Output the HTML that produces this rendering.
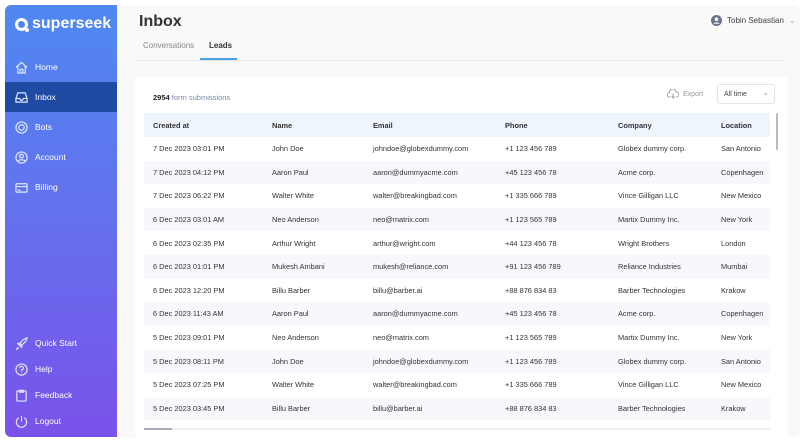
<!DOCTYPE html>
<html><head><style>
*{box-sizing:border-box;margin:0;padding:0}
body{width:806px;height:442px;background:#fff;font-family:"Liberation Sans",sans-serif;position:relative;overflow:hidden;color:#222}
.app{position:absolute;left:5px;top:5px;width:795px;height:432px;background:#f9f9fa;border-radius:6px;overflow:hidden}
.side{position:absolute;left:0;top:0;width:112px;height:432px;background:linear-gradient(180deg,#4f88f1 0%,#6470ee 50%,#7a52ea 100%)}
.logo{position:absolute;left:10px;top:10px;color:#fff;font-size:16px;font-weight:bold;display:flex;align-items:center;gap:4px}
.logo .o{width:13px;height:13px;border:3px solid #fff;border-radius:50%;position:relative}
.logo .o:after{content:"";position:absolute;right:-4px;bottom:-4px;width:4px;height:4px;background:#fff;border-radius:50%}
.nav{position:absolute;left:0;width:112px;height:30px;display:flex;align-items:center;padding-left:10px;color:#fff;font-size:8.5px;gap:7px}
.nav svg{width:13px;height:13px;fill:none;stroke:#dfe6ff;stroke-width:1.3}
.nav.act{background:#1f4aa3}
.title{position:absolute;left:134px;top:8px;font-size:16px;font-weight:bold;color:#333}
.tabs{position:absolute;left:138px;top:41px;font-size:8px;color:#888}
.tabs span{position:absolute;white-space:nowrap}
.uline{position:absolute;left:195px;top:53px;width:37px;height:2px;background:#4aa3e0}
.hline{position:absolute;left:130px;top:55px;width:650px;height:1px;background:#e8e8ea}
.user{position:absolute;left:706px;top:10px;font-size:8px;color:#444;display:flex;align-items:center;gap:5px}
.card{position:absolute;left:130px;top:72px;width:653px;height:360px;background:#fff;border-radius:4px}
.sub{position:absolute;left:18px;top:16px;font-size:7.5px;color:#7a88a8}
.sub b{color:#222}
.export{position:absolute;left:532px;top:12px;font-size:7px;color:#999;display:flex;align-items:center;gap:4px}
.sel{position:absolute;left:582px;top:7px;width:58px;height:20px;border:1px solid #e3e3e6;border-radius:3px;font-size:7px;color:#444;padding:6px 0 0 6px}
.sel:after{content:"⌄";position:absolute;right:5px;top:3px;color:#999;font-size:8px}
table{position:absolute;left:9px;top:36px;width:626px;border-collapse:collapse;font-size:7.4px;color:#333}
td,th{height:23.6px;text-align:left;font-weight:normal;padding-left:9px;white-space:nowrap}
th{font-weight:bold;color:#333;background:#eef5fd;height:24px}
tr:nth-child(odd) td{background:#f6f8fb}
.vs{position:absolute;left:641px;top:36px;width:2px;height:37px;background:#bbb;border-radius:1px}
.hs{position:absolute;left:9px;top:351px;width:626px;height:2px;background:#eee}
.hs i{display:block;width:28px;height:2px;background:#aab}
</style></head><body>
<div class="app">
<div class="side">
<div class="logo"><div class="o"></div>superseek</div>
<div class="nav" style="top:47px"><svg viewBox="0 0 14 14"><path d="M1 7L7 1.5 13 7M3 5.5V13h8V5.5M5.5 13V9h3v4"/></svg>Home</div>
<div class="nav act" style="top:77px"><svg viewBox="0 0 14 14"><path d="M1 8L3 2h8l2 6v4H1zM1 8h4l1 2h2l1-2h4"/></svg>Inbox</div>
<div class="nav" style="top:107px"><svg viewBox="0 0 14 14"><circle cx="7" cy="7" r="6"/><circle cx="7" cy="7" r="3"/></svg>Bots</div>
<div class="nav" style="top:137px"><svg viewBox="0 0 14 14"><circle cx="7" cy="7" r="6"/><circle cx="7" cy="5.5" r="2"/><path d="M3 11c1-2 7-2 8 0"/></svg>Account</div>
<div class="nav" style="top:167px"><svg viewBox="0 0 14 14"><rect x="1" y="3" width="12" height="9" rx="1"/><path d="M1 6h12M3 10h3"/></svg>Billing</div>
<div class="nav" style="top:323px"><svg viewBox="0 0 14 14"><path d="M3 11l-1 2 2-1M5 9C6 5 9 2 13 1c-1 4-4 7-8 8zM5 9L3 7l2-1M5 9l2 2 1-2"/></svg>Quick Start</div>
<div class="nav" style="top:349px"><svg viewBox="0 0 14 14"><circle cx="7" cy="7" r="6"/><path d="M5 5.5a2 2 0 1 1 2 2v1.5M7 10.5v.5"/></svg>Help</div>
<div class="nav" style="top:375px"><svg viewBox="0 0 14 14"><rect x="2" y="2" width="10" height="11" rx="1"/><path d="M5 1.5h4v2H5z"/></svg>Feedback</div>
<div class="nav" style="top:401px"><svg viewBox="0 0 14 14"><path d="M7 1v6M4 3a5.5 5.5 0 1 0 6 0"/></svg>Logout</div>
</div>
<div class="title">Inbox</div>
<div class="tabs"><span style="left:0;top:-5px">Conversations</span><span style="left:66px;top:-5px;color:#333;font-weight:bold">Leads</span></div>
<div class="hline"></div><div class="uline"></div>
<div class="user"><svg width="11" height="11" viewBox="0 0 12 12"><circle cx="6" cy="6" r="6" fill="#6a7488"/><circle cx="6" cy="4.6" r="2" fill="#f9f9fa"/><path d="M2.5 9.5c1.5-2 5.5-2 7 0" fill="#f9f9fa"/></svg>Tobin Sebastian <span style="color:#aaa">⌄</span></div>
<div class="card">
<div class="sub"><b>2954</b> form submissions</div>
<div class="export"><svg width="12" height="10" viewBox="0 0 12 10" fill="none" stroke="#999" stroke-width="0.9"><path d="M3 8H2.5a2.2 2.2 0 0 1 0-4.4A3.2 3.2 0 0 1 9 3a2.5 2.5 0 0 1 .5 5H9M6 4.5v4.5M4.5 7.5L6 9l1.5-1.5"/></svg>Export</div>
<div class="sel">All time</div>
<table>
<tr><th style="width:119px">Created at</th><th style="width:101px">Name</th><th style="width:132px">Email</th><th style="width:113px">Phone</th><th style="width:103px">Company</th><th>Location</th></tr>
<tr><td>7 Dec 2023 03:01 PM</td><td>John Doe</td><td>johndoe@globexdummy.com</td><td>+1 123 456 789</td><td>Globex dummy corp.</td><td>San Antonio</td></tr>
<tr><td>7 Dec 2023 04:12 PM</td><td>Aaron Paul</td><td>aaron@dummyacme.com</td><td>+45 123 456 78</td><td>Acme corp.</td><td>Copenhagen</td></tr>
<tr><td>7 Dec 2023 06:22 PM</td><td>Walter White</td><td>walter@breakingbad.com</td><td>+1 335 666 789</td><td>Vince Gilligan LLC</td><td>New Mexico</td></tr>
<tr><td>6 Dec 2023 03:01 AM</td><td>Neo Anderson</td><td>neo@matrix.com</td><td>+1 123 565 789</td><td>Martix Dummy Inc.</td><td>New York</td></tr>
<tr><td>6 Dec 2023 02:35 PM</td><td>Arthur Wright</td><td>arthur@wright.com</td><td>+44 123 456 78</td><td>Wright Brothers</td><td>London</td></tr>
<tr><td>6 Dec 2023 01:01 PM</td><td>Mukesh Ambani</td><td>mukesh@reliance.com</td><td>+91 123 456 789</td><td>Reliance Industries</td><td>Mumbai</td></tr>
<tr><td>6 Dec 2023 12:20 PM</td><td>Billu Barber</td><td>billu@barber.ai</td><td>+88 876 834 83</td><td>Barber Technologies</td><td>Krakow</td></tr>
<tr><td>6 Dec 2023 11:43 AM</td><td>Aaron Paul</td><td>aaron@dummyacme.com</td><td>+45 123 456 78</td><td>Acme corp.</td><td>Copenhagen</td></tr>
<tr><td>5 Dec 2023 09:01 PM</td><td>Neo Anderson</td><td>neo@matrix.com</td><td>+1 123 565 789</td><td>Martix Dummy Inc.</td><td>New York</td></tr>
<tr><td>5 Dec 2023 08:11 PM</td><td>John Doe</td><td>johndoe@globexdummy.com</td><td>+1 123 456 789</td><td>Globex dummy corp.</td><td>San Antonio</td></tr>
<tr><td>5 Dec 2023 07:25 PM</td><td>Walter White</td><td>walter@breakingbad.com</td><td>+1 335 666 789</td><td>Vince Gilligan LLC</td><td>New Mexico</td></tr>
<tr><td>5 Dec 2023 03:45 PM</td><td>Billu Barber</td><td>billu@barber.ai</td><td>+88 876 834 83</td><td>Barber Technologies</td><td>Krakow</td></tr>
</table>
<div class="vs"></div>
<div class="hs"><i></i></div>
</div>
</div>
</body></html>
